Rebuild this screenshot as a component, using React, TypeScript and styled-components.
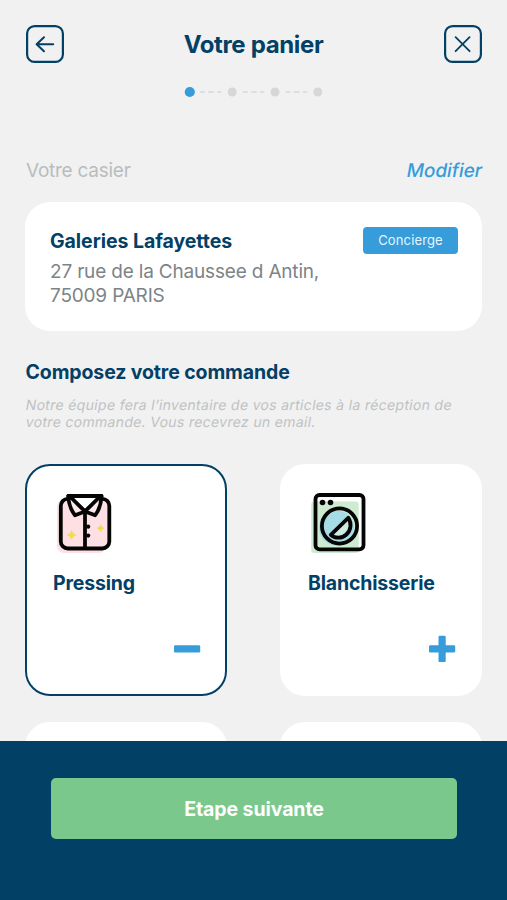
import React from "react";
import styled, { createGlobalStyle } from "styled-components";

const navy = "#034066";
const blue = "#369dda";

const GlobalStyle = createGlobalStyle`
  * { box-sizing: border-box; }
  body { margin: 0; background: #f1f1f1; font-family: Inter, "Liberation Sans", sans-serif; }
  button { font: inherit; padding: 0; margin: 0; border: 0; background: none; cursor: pointer; }
  h1, h2, h3, p { margin: 0; }
`;

const Screen = styled.div`
  width: 507px;
  height: 900px;
  display: flex;
  flex-direction: column;
  overflow: hidden;
  background: #f1f1f1;
`;

const Content = styled.main`
  height: 741px;
  flex: none;
  overflow: hidden;
  padding: 25px 25px 0;
`;

const Header = styled.header`
  display: flex;
  align-items: center;
  justify-content: space-between;
  height: 38px;
  padding: 0 0 0 1px;
`;

const IconButton = styled.button`
  width: 38px;
  height: 38px;
  display: flex;
  svg { display: block; }
`;

const Title = styled.h1`
  padding: 1px 1px 0 0;
  font-size: 24px;
  line-height: 38px;
  font-weight: 700;
  letter-spacing: -0.35px;
  color: ${navy};
`;

const Steps = styled.div`
  display: flex;
  justify-content: center;
  margin-top: 23px;
  height: 12px;
  svg { display: block; }
`;

const SectionBar = styled.div`
  display: flex;
  justify-content: space-between;
  align-items: center;
  height: 30px;
  margin-top: 57px;
  padding-left: 1px;
`;

const SectionLabel = styled.span`
  font-size: 19px;
  letter-spacing: -0.25px;
  color: #b9bdbf;
`;

const EditLink = styled.button`
  font-size: 19px;
  font-weight: 500;
  letter-spacing: -0.1px;
  color: ${blue};
  transform: skewX(-10deg);
`;

const LockerCard = styled.section`
  height: 129px;
  margin-top: 17px;
  border-radius: 25px;
  background: #fff;
  padding: 24px 24px 0 25px;
`;

const LockerTop = styled.div`
  display: flex;
  justify-content: space-between;
  align-items: center;
  height: 28px;
`;

const LockerName = styled.h2`
  padding-top: 1px;
  font-size: 19.5px;
  line-height: 28px;
  font-weight: 700;
  letter-spacing: -0.05px;
  color: ${navy};
`;

const Badge = styled.span`
  width: 95px;
  height: 27px;
  border-radius: 4px;
  background: ${blue};
  color: #e6f5fd;
  font-size: 13px;
  line-height: 26px;
  letter-spacing: 0.15px;
  text-align: center;
`;

const Address = styled.p`
  margin-top: 5.5px;
  font-size: 19px;
  line-height: 24.5px;
  letter-spacing: -0.18px;
  color: #7d8488;
`;

const OrderTitle = styled.h2`
  margin-top: 26.5px;
  padding-left: 0.5px;
  font-size: 19.5px;
  line-height: 28px;
  font-weight: 700;
  letter-spacing: -0.12px;
  color: ${navy};
`;

const Note = styled.p`
  margin-top: 10px;
  padding-left: 0.5px;
  font-size: 14px;
  line-height: 17px;
  letter-spacing: 0.32px;
  white-space: nowrap;
  color: #bfc2c3;
`;

const NoteLine = styled.span`
  display: block;
  width: max-content;
  transform: skewX(-10deg);
`;

const ServiceGrid = styled.div`
  display: grid;
  grid-template-columns: 202px 202px;
  grid-auto-rows: 232px;
  justify-content: space-between;
  row-gap: 25.5px;
  margin-top: 34.5px;
`;

const ServiceCard = styled.article<{ $selected?: boolean }>`
  border: 2.5px solid ${(p) => (p.$selected ? navy : "#fff")};
  border-radius: 25px;
  background: #fff;
  display: flex;
  flex-direction: column;
  align-items: flex-start;
  padding: 24px 24px 0 26px;
`;

const ServiceIcon = styled.div`
  width: 60px;
  height: 64px;
  margin-left: 1.5px;
  svg { display: block; }
`;

const ServiceName = styled.h3`
  margin-top: 15px;
  font-size: 19.5px;
  line-height: 28px;
  font-weight: 700;
  letter-spacing: -0.17px;
  color: ${navy};
`;

const ToggleButton = styled.button`
  align-self: flex-end;
  margin-top: 38px;
  width: 27px;
  height: 28px;
  svg { display: block; }
`;

const Footer = styled.footer`
  flex: 1;
  background: ${navy};
  padding: 37px 50px 0 51px;
`;

const NextButton = styled.button`
  width: 100%;
  height: 61px;
  border-radius: 5px;
  background: #7ac88c;
  color: #fff;
  font-size: 19.5px;
  font-weight: 700;
  letter-spacing: -0.08px;
`;

const BackIcon = () => (
  <svg width="38" height="38" viewBox="0 0 38 38" fill="none" stroke={navy} strokeWidth="2" strokeLinecap="round" strokeLinejoin="round">
    <rect x="1.1" y="1.1" width="35.8" height="35.8" rx="7.5" strokeWidth="2.2" />
    <path d="M27.2 19.2H10.6M18 12.2L10.6 19.2L18 26.2" />
  </svg>
);

const CloseIcon = () => (
  <svg width="38" height="38" viewBox="0 0 38 38" fill="none" stroke={navy} strokeWidth="1.8" strokeLinecap="round">
    <rect x="1.1" y="1.1" width="35.8" height="35.8" rx="7.5" strokeWidth="2.2" />
    <path d="M11.6 12.2L25.6 26.2M25.6 12.2L11.6 26.2" />
  </svg>
);

const StepDots = () => (
  <svg width="140" height="12" viewBox="0 0 140 12">
    <circle cx="5.8" cy="6" r="5.1" fill={blue} />
    {[48.2, 91, 133.8].map((x) => (
      <g key={x}>
        <circle cx={x} cy="6" r="4.5" fill="#d5d7d8" />
        <path d={`M${x - 31.3} 6h3.2m5 0h4m5 0h2.6`} stroke="#dcdedf" strokeWidth="2.2" strokeLinecap="round" />
      </g>
    ))}
  </svg>
);

const ShirtIcon = () => (
  <svg width="60" height="64" viewBox="0 0 60 64" fill="none" stroke="#050505" strokeWidth="3.8" strokeLinejoin="round">
    <rect x="2" y="10" width="48.5" height="53" rx="7" fill="#fddfe4" stroke="none" />
    <rect x="5.8" y="8.8" width="48.5" height="49.7" rx="7" fill="#fddfe4" />
    <path d="M13.3 6H46.5L30 21.5Z" fill="#fff" />
    <path d="M13.3 6C13.6 13 15.8 20 20 25.2L30 21.5L15 6.5Z" fill="#fde8eb" />
    <path d="M46.5 6C46.2 13 44.2 20 40.2 25.2L30 21.5L45 6.5Z" fill="#fde8eb" />
    <path d="M30 21.5V58.5" />
    <g fill="#050505" stroke="none">
      <circle cx="33.2" cy="36.7" r="2.1" />
      <circle cx="33.2" cy="45.6" r="2.1" />
    </g>
    <g fill="#f2dc45" stroke="#f2dc45" strokeWidth="0.7">
      <path d="M16.7 40.5Q17.4 44.3 21.2 45Q17.4 45.7 16.7 49.5Q16 45.7 12.2 45Q16 44.3 16.7 40.5Z" />
      <path d="M45.6 34.8Q46.2 37.6 49 38.2Q46.2 38.8 45.6 41.6Q45 38.8 42.2 38.2Q45 37.6 45.6 34.8Z" />
    </g>
  </svg>
);

const WasherIcon = () => (
  <svg width="60" height="64" viewBox="0 0 60 64" fill="none" stroke="#050505" strokeWidth="3.8" strokeLinejoin="round">
    <rect x="1.2" y="11.5" width="47.5" height="51.5" rx="3" fill="#cdebd0" stroke="none" />
    <circle cx="26.5" cy="38" r="17.5" fill="#a5dce6" stroke="none" />
    <rect x="5.5" y="5" width="48" height="54.3" rx="4" />
    <circle cx="29.5" cy="36" r="17.6" />
    <path d="M38.3 27.8L20.8 44.8C25.2 48.8 32 48.6 36.4 44.5C41.2 40 41.8 33.2 38.3 27.8Z" fill="#cfe9e3" />
    <g fill="#050505" stroke="none">
      <circle cx="12.5" cy="12.5" r="2.8" />
      <circle cx="20.5" cy="12.5" r="2.8" />
    </g>
  </svg>
);

const SignIcon = ({ plus }: { plus?: boolean }) => (
  <svg width="27" height="28" viewBox="0 0 27 28" fill={blue}>
    <rect x="0" y="10.3" width="26.2" height="7.2" rx="1.2" />
    {plus && <rect x="9.5" y="0.8" width="7.2" height="26.3" rx="1.2" />}
  </svg>
);

export default function App() {
  return (
    <>
      <GlobalStyle />
      <Screen>
        <Content>
          <Header>
            <IconButton aria-label="Retour"><BackIcon /></IconButton>
            <Title>Votre panier</Title>
            <IconButton aria-label="Fermer"><CloseIcon /></IconButton>
          </Header>
          <Steps><StepDots /></Steps>
          <SectionBar>
            <SectionLabel>Votre casier</SectionLabel>
            <EditLink>Modifier</EditLink>
          </SectionBar>
          <LockerCard>
            <LockerTop>
              <LockerName>Galeries Lafayettes</LockerName>
              <Badge>Concierge</Badge>
            </LockerTop>
            <Address>
              27 rue de la Chaussee d Antin,<br />75009 PARIS
            </Address>
          </LockerCard>
          <OrderTitle>Composez votre commande</OrderTitle>
          <Note>
            <NoteLine>Notre équipe fera l’inventaire de vos articles à la réception de</NoteLine>
            <NoteLine>votre commande. Vous recevrez un email.</NoteLine>
          </Note>
          <ServiceGrid>
            <ServiceCard $selected>
              <ServiceIcon><ShirtIcon /></ServiceIcon>
              <ServiceName>Pressing</ServiceName>
              <ToggleButton aria-label="Retirer"><SignIcon /></ToggleButton>
            </ServiceCard>
            <ServiceCard>
              <ServiceIcon><WasherIcon /></ServiceIcon>
              <ServiceName>Blanchisserie</ServiceName>
              <ToggleButton aria-label="Ajouter"><SignIcon plus /></ToggleButton>
            </ServiceCard>
            <ServiceCard />
            <ServiceCard />
          </ServiceGrid>
        </Content>
        <Footer>
          <NextButton>Etape suivante</NextButton>
        </Footer>
      </Screen>
    </>
  );
}
